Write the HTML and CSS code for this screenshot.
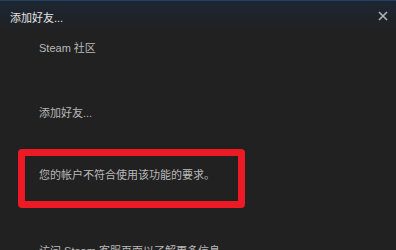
FILE: index.html
```html
<!DOCTYPE html>
<html>
<head>
    <title>添加好友...</title>
    <link rel="stylesheet" href="styles.css">
</head>
<body>
    <header class="dialog-title">
        <span>添加好友...</span>
        <svg class="close-icon" width="10" height="10" viewBox="0 0 10 10">
            <path d="M1 1 L9 9 M9 1 L1 9" stroke="#b4b4b4" stroke-width="1.6" fill="none"/>
        </svg>
    </header>
    <main class="dialog-body">
        <p class="line">Steam 社区</p>
        <p class="line add-friend">添加好友...</p>
        <div class="notice">
            <p class="line">您的帐户不符合使用该功能的要求。</p>
        </div>
        <p class="line support">访问 Steam 客服页面以了解更多信息。</p>
    </main>
</body>
</html>
```

FILE: styles.css
```css
body {
    margin: 0;
    background-color: #212121;
    color: #b9b9b9;
    font-family: "Liberation Sans", "Noto Sans CJK SC", sans-serif;
    font-size: 11px;
    overflow: hidden;
}
.dialog-title {
    height: 32px;
    display: flex;
    align-items: center;
    justify-content: space-between;
    padding: 0 8px 0 10px;
    box-sizing: border-box;
    border-top: 1px solid #24405e;
    background: linear-gradient(to bottom, #1c2633 0%, #212121 100%);
    color: #e4e4e4;
}
.close-icon {
    margin-top: -2px;
}
.dialog-body {
    padding-left: 18px;
}
.line {
    margin: 0;
    line-height: 16px;
    padding-left: 21px;
}
.dialog-body > .line:first-child {
    margin-top: 8px;
}
.add-friend {
    margin-top: 49px !important;
}
.notice {
    width: 227px;
    box-sizing: border-box;
    margin-top: 28px;
    border: 7px solid #ec1a24;
    border-radius: 4px;
    padding: 11px 0 18px 0;
}
.notice .line {
    padding-left: 14px;
}
.support {
    margin-top: 35px !important;
}
```
